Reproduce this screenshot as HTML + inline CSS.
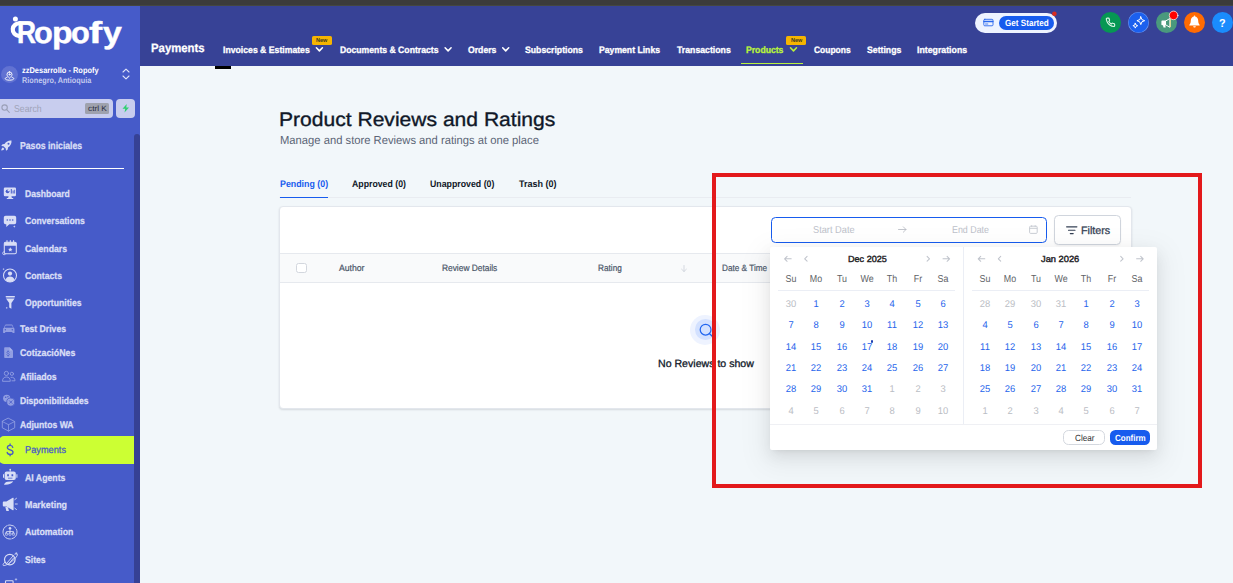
<!DOCTYPE html>
<html lang="en">
<head>
<meta charset="utf-8">
<title>Product Reviews and Ratings</title>
<style>
*{box-sizing:border-box;margin:0;padding:0}
html,body{width:1233px;height:583px;overflow:hidden}
body{position:relative;background:#f2f7fa;font-family:"Liberation Sans",sans-serif;color:#101828;text-rendering:geometricPrecision}
.a{position:absolute}
.t{position:absolute;white-space:nowrap;line-height:1;transform-origin:0 50%}
.c{transform-origin:50% 50%}
svg{position:absolute;overflow:visible}
</style>
</head>
<body>
<div class="a" style="left:0;top:0;width:1233px;height:5px;background:#3b3b3b"></div>
<div class="a" style="left:0;top:5px;width:140px;height:578px;background:#465bc9"></div>
<div class="a" style="left:140px;top:5px;width:1093px;height:61px;background:#374296"></div>
<div class="a" style="left:0;top:5px;width:1233px;height:1px;background:#444741"></div>
<div class="a" style="left:215px;top:66px;width:16px;height:3px;background:#000"></div>
<!-- sidebar scrollbar -->
<div class="a" style="left:134px;top:133.5px;width:6px;height:460px;background:#364195;border-radius:3px"></div>
<svg style="left:0;top:0" width="40" height="60" viewBox="0 0 40 60" fill="none"><circle cx="15.4" cy="19.1" r="2.5" fill="#fff"/><path d="M20 23.3A6.6 6.3 0 1 0 18.8 35.9" stroke="#fff" stroke-width="4.2" stroke-linecap="round"/></svg>
<!-- account -->
<div class="a" style="left:1px;top:66px;width:17px;height:17px;border-radius:50%;background:#6172d2"></div>
<svg style="left:0;top:60.9px" width="20" height="30" viewBox="0 60 20 30" fill="none" stroke="#fff" stroke-width=".95" stroke-linecap="round" stroke-linejoin="round"><path d="M9.5 70.9a2.5 2.5 0 0 1 2.5 2.5c0 1.6-1.5 2.8-2.5 3.8-1-1-2.5-2.2-2.5-3.8a2.5 2.5 0 0 1 2.5-2.5z"/><circle cx="9.5" cy="73.4" r=".6"/><path d="M7 76.3c-1.1.3-1.8.8-1.8 1.3 0 .9 1.9 1.6 4.3 1.6s4.3-.7 4.3-1.6c0-.5-.7-1-1.8-1.3"/></svg>
<svg style="left:122px;top:68px" width="8" height="12" viewBox="0 0 8 12" fill="none" stroke="#dfe3f8" stroke-width="1.1" stroke-linecap="round" stroke-linejoin="round"><path d="M1 4 4 1.2 7 4"/><path d="M1 8 4 10.8 7 8"/></svg>
<!-- search -->
<div class="a" style="left:-4px;top:99px;width:117px;height:19px;border-radius:4px;background:#c8cdee"></div>
<svg style="left:1px;top:104px" width="9" height="9" viewBox="0 0 9 9" fill="none" stroke="#9a9fb6" stroke-width="1.1" stroke-linecap="round"><circle cx="3.6" cy="3.6" r="2.7"/><path d="M5.7 5.7 8.3 8.3"/></svg>
<div class="a" style="left:85px;top:103px;width:24px;height:11px;border-radius:1.5px;background:#9fa2ae"></div>
<div class="a" style="left:116px;top:99px;width:19px;height:19px;border-radius:4px;background:#c8cdee"></div>
<svg style="left:122px;top:104px" width="7.5" height="8.5" viewBox="0 0 15 17"><path d="M9.5 0 1 9.5h5.5L5 17l9-10H8.5z" fill="#2fd071"/></svg>
<!-- pasos iniciales rocket -->
<svg style="left:1px;top:140px" width="11" height="11" viewBox="0 0 22 22" fill="#d9def6"><path d="M21 1c-6-.5-11 2-14 7L3 8.5.5 12l4.5.5 4.5 4.5.5 4.5L13.5 19l.5-4c5-3 7.5-8 7-14zM15 9.5A2 2 0 1 1 15 5.5a2 2 0 0 1 0 4z"/><path d="M4 15c-2 .5-3 2.5-3.5 6 3.5-.5 5.5-1.5 6-3.5z"/></svg>
<div class="a" style="left:2px;top:167.6px;width:122px;height:1px;background:#fff"></div>
<!-- active item -->
<div class="a" style="left:-1px;top:436px;width:135px;height:28px;border-radius:5px 0 0 5px;background:#ccff33"></div>
<svg style="left:0;top:0" width="140" height="583" viewBox="0 0 140 583" fill="none" stroke-linecap="round" stroke-linejoin="round">
<g fill="#d9def6" stroke="none">
<!-- dashboard -->
<path d="M5 187.5h9.8a1.2 1.2 0 0 1 1.2 1.2v6.3a1.2 1.2 0 0 1-1.2 1.2H5a1.2 1.2 0 0 1-1.2-1.2v-6.3A1.2 1.2 0 0 1 5 187.5z"/>
<path d="M8.6 196h2.8l.5 2h1.3v.9H6.8v-.9h1.3z"/>
<!-- conversations -->
<path d="M5.6 215.8h8.8a1.8 1.8 0 0 1 1.8 1.8v4.9a1.8 1.8 0 0 1-1.8 1.8H9.3L6.3 226.9v-2.6h-.7a1.8 1.8 0 0 1-1.8-1.8v-4.9a1.8 1.8 0 0 1 1.8-1.8z"/>
<path d="M14.3 225.3l.35.9.9.35-.9.35-.35.9-.35-.9-.9-.35.9-.35z"/>
<!-- calendar -->
<path d="M4.3 243.5a1.3 1.3 0 0 1 1.3-1.3h9.4a1.3 1.3 0 0 1 1.3 1.3v2.3H4.3z"/>
<path d="M10.3 247.3l.65 1.4 1.5.2-1.1 1.05.3 1.5-1.35-.75-1.35.75.3-1.5-1.1-1.05 1.5-.2z"/>
<!-- contacts -->
<circle cx="10" cy="273.6" r="2.1"/>
<path d="M5.6 279.8c.6-2.3 2.3-3.3 4.4-3.3s3.8 1 4.4 3.3c-1.1 1.3-2.7 2.1-4.4 2.1s-3.3-.8-4.4-2.1z"/>
<path d="M3.6 268l.3.8.8.3-.8.3-.3.8-.3-.8-.8-.3.8-.3z"/>
<!-- funnel -->
<path d="M6.3 296.1h8a.7.7 0 0 1 0 1.4h-8a.7.7 0 0 1 0-1.4z"/>
<path d="M6 298.5h8.6l-3.2 4.6v5.7l-2.2-1.3v-4.4z"/>
<path d="M6.8 306.8l.3.8.8.3-.8.3-.3.8-.3-.8-.8-.3.8-.3z"/>
<!-- robot -->
<circle cx="10.2" cy="469.7" r=".9"/>
<path d="M9.8 470h.8v1.8h-.8z"/>
<path d="M6.6 471.5h7.2a2 2 0 0 1 2 2v4.6a2 2 0 0 1-2 2H6.6a2 2 0 0 1-2-2v-4.6a2 2 0 0 1 2-2z"/>
<path d="M3 474.3h1v3.4H3zM16.4 474.3h1v3.4h-1z"/>
<path d="M4 484.8c.3-1.8 1.8-2.9 3.6-3.1l5.6-.4c-1.3 2.3-4.5 3.8-9.2 3.5z"/>
<!-- megaphone -->
<path d="M3.8 501.6h2.6l6.4-3.8a.5.5 0 0 1 .8.4v11.6a.5.5 0 0 1-.8.4l-6.4-3.8H3.8a1 1 0 0 1-1-1v-2.8a1 1 0 0 1 1-1z"/>
<path d="M5.3 506.8l2.6.5.9 3a.6.6 0 0 1-.6.8H6.8a.6.6 0 0 1-.6-.5z"/>
<!-- automation -->
<circle cx="10" cy="528.3" r="1.25"/>
</g>
<g fill="#465bc9" stroke="none">
<!-- dashboard cutouts -->
<circle cx="7.6" cy="191.3" r="1.9"/>
<path d="M10.8 189h1v4.6h-1zM12.6 190.5h1v3.1h-1zM14.3 189.8h.8v3.8h-.8z"/>
<!-- conversation dots -->
<circle cx="7.3" cy="220" r=".8"/><circle cx="10" cy="220" r=".8"/><circle cx="12.7" cy="220" r=".8"/>
<!-- robot face -->
<path d="M7.2 474.3h1.7v2h-1.7zM11.5 474.3h1.7v2h-1.7zM8 477.8h4.4v.8H8z"/>
</g>
<g fill="#d9def6" stroke="none"><path d="M7.6 189.4v1.9h1.9a1.9 1.9 0 0 0-1.9-1.9z"/></g>
<g stroke="#d9def6" stroke-width="1.05">
<!-- calendar outline -->
<rect x="4.3" y="242.3" width="12" height="11.4" rx="1.3"/>
<path d="M7 240.4v2M10.3 240.4v2M13.6 240.4v2"/>
<path d="M4.3 251.6a1.6 1.6 0 1 0 1.5 2.1" stroke-width=".8"/>
<!-- contacts circle -->
<circle cx="10" cy="275.5" r="6.5"/>
<!-- megaphone waves -->
<path d="M14.8 499.6l1.7-1.3M15.3 504h2M14.8 508.2l1.7 1.3" stroke-width=".9"/>
<!-- automation -->
<circle cx="10" cy="532" r="7" stroke-width=".9" stroke-dasharray="9 1.2"/>
<path d="M10 529.5v2M6.5 533v-1.5h7V533M10 531.5V533" stroke-width=".8"/>
<rect x="5.4" y="533" width="2.2" height="2.2" rx=".4" stroke-width=".7"/><rect x="8.9" y="533" width="2.2" height="2.2" rx=".4" stroke-width=".7"/><rect x="12.4" y="533" width="2.2" height="2.2" rx=".4" stroke-width=".7"/>
<!-- sites -->
<circle cx="9.8" cy="559.6" r="5.3" stroke-width="1.2"/>
<path d="M6.8 563.2l6.2-7.2M8.3 564.3l5.6-6.6" stroke-width=".9"/>
<path d="M4.8 562.3c-1.5 1.4-2.1 2.5-1.7 3 .8 1 4.7-.7 8.6-3.8s6.4-6.4 5.6-7.4c-.3-.4-1.2-.4-2.4 0" stroke-width=".9"/>
<path d="M16.3 552.5v1.6M15.5 553.3h1.6" stroke-width=".6"/>
<!-- next item -->
<path d="M5.5 583v-1.5a.8.8 0 0 1 .8-.8h6a.8.8 0 0 1 .8.8v1.5" stroke-width="1.1"/>
<path d="M16 578.6v1.6M15.2 579.4h1.6" stroke-width=".6"/>
</g>
<!-- dim icons -->
<g fill="#919ee2" stroke="none">
<!-- car -->
<path d="M5.9 324.6h5.8a1 1 0 0 1 .95.65l.95 2.55a1.3 1.3 0 0 1 .9 1.25V332.6a.5.5 0 0 1-.5.5h-1.1a.5.5 0 0 1-.5-.5v-.7H5.2v.7a.5.5 0 0 1-.5.5H3.6a.5.5 0 0 1-.5-.5v-3.55a1.3 1.3 0 0 1 .9-1.25l.95-2.55a1 1 0 0 1 .95-.65z"/>
<!-- doc -->
<path d="M5 347.2h4.8l3.2 3.2v6.8a.8.8 0 0 1-.8.8H5a.8.8 0 0 1-.8-.8V348a.8.8 0 0 1 .8-.8z"/>
<!-- coins -->
<circle cx="6.7" cy="398.3" r="3.6"/>
<circle cx="10.8" cy="402.1" r="4.1" stroke="#465bc9" stroke-width=".8"/>
</g>
<g fill="#465bc9" stroke="none">
<path d="M5.5 325.6h6.6l.8 2.1H4.7z"/>
<circle cx="5.3" cy="329.7" r=".7"/><circle cx="12.3" cy="329.7" r=".7"/>
<path d="M9.6 347.4v3h3z" fill="#aab4ea"/>
<circle cx="5.7" cy="397.3" r=".8"/><circle cx="7.9" cy="396.7" r=".7"/>
</g>
<g stroke="#465bc9" stroke-width=".8"><path d="M9.5 400.8l2.6 2.6M12.1 400.8l-2.6 2.6"/>
<path d="M9.3 352.3c-.2-.6-.7-.8-1.2-.8-.7 0-1.2.4-1.2 1 0 1.3 2.5.7 2.5 2 0 .6-.5 1-1.3 1-.6 0-1.1-.3-1.3-.9M8.1 350.8v.7M8.1 355.5v.7" stroke-width=".7"/></g>
<g stroke="#919ee2" stroke-width=".9">
<!-- users -->
<circle cx="6.4" cy="373.4" r="2.1"/>
<path d="M2.5 380.9c0-2.7 1.7-3.9 3.9-3.9s3.9 1.2 3.9 3.9z"/>
<circle cx="11.9" cy="373.8" r="1.6"/>
<path d="M11 377.3c2.4-.4 4 .9 4 3.5h-3"/>
<!-- cube -->
<path d="M8.5 418.3l6.2 3.2v6.3l-6.2 3.2-6.2-3.2v-6.3z"/>
<path d="M2.3 421.5l6.2 3.2 6.2-3.2M8.5 424.7v6.3" stroke-width=".8"/>
</g>
<!-- dollar -->
<g stroke="#4558c8" stroke-width="1.5" transform="translate(10.1 450) scale(.86 .93) translate(-10 -450)">
<path d="M13.1 447.1c-.3-1.4-1.5-2.1-3.1-2.1-1.9 0-3.2.9-3.2 2.4 0 3.3 6.6 1.6 6.6 5 0 1.5-1.3 2.4-3.4 2.4-1.8 0-3.1-.8-3.4-2.2"/>
<path d="M10 443.6v1.4M10 454.8v1.4"/>
</g>
</svg>

<!-- topbar -->
<div class="a" style="left:312px;top:36.2px;width:19.8px;height:8.5px;border-radius:1.6px;background:#f5b401"></div>
<div class="a" style="left:786.4px;top:36.2px;width:19.6px;height:8.5px;border-radius:1.6px;background:#f5b401"></div>
<div class="a" style="left:741px;top:62.5px;width:62px;height:1.6px;background:#b9f23c"></div>
<div class="a" style="left:975px;top:12.6px;width:82.2px;height:20.2px;border-radius:10.1px;background:#eef3ff"></div>
<div class="a" style="left:999px;top:15.5px;width:55.4px;height:14.5px;border-radius:7.3px;background:#175cee"></div>
<div class="a" style="left:1100px;top:11.8px;width:21px;height:21px;border-radius:50%;background:#069753"></div>
<div class="a" style="left:1128px;top:11.8px;width:21px;height:21px;border-radius:50%;background:#1b60ee;box-shadow:inset 0 0 0 .6px rgba(255,255,255,.35)"></div>
<div class="a" style="left:1156px;top:11.8px;width:21px;height:21px;border-radius:50%;background:#4a9a7d"></div>
<div class="a" style="left:1184px;top:11.8px;width:21px;height:21px;border-radius:50%;background:#ff6b02"></div>
<div class="a" style="left:1212px;top:11.8px;width:21px;height:21px;border-radius:50%;background:#1a8cfd"></div>
<svg style="left:140px;top:0" width="1093" height="70" viewBox="140 0 1093 70" fill="none" stroke-linecap="round" stroke-linejoin="round">
<g stroke="#fff" stroke-width="1.55">
<path d="M316.4 47.8l3 3.1 3-3.1M445.1 47.8l3 3.1 3-3.1M502.7 47.8l3 3.1 3-3.1"/>
<path d="M790.5 47.8l3 3.1 3-3.1" stroke="#b9f23c"/>
</g>
<!-- card icon -->
<g stroke="#2a68ee" stroke-width=".9"><rect x="983.8" y="19.3" width="9.2" height="6.5" rx="1"/><path d="M984 21.5h8.8" stroke-width="1.5"/><path d="M985.5 24h2.3" stroke-width=".8"/></g>
<circle cx="1054.4" cy="13.8" r="2.3" fill="#d92d20"/>
<!-- phone -->
<g transform="translate(1105.4 17.3) scale(.42)" stroke="#d9f5e5" stroke-width="2.7"><path d="M22 16.92v3a2 2 0 0 1-2.18 2 19.79 19.79 0 0 1-8.63-3.07 19.5 19.5 0 0 1-6-6 19.79 19.79 0 0 1-3.07-8.67A2 2 0 0 1 4.11 2h3a2 2 0 0 1 2 1.72 12.84 12.84 0 0 0 .7 2.81 2 2 0 0 1-.45 2.11L8.09 9.91a16 16 0 0 0 6 6l1.27-1.27a2 2 0 0 1 2.11-.45 12.84 12.84 0 0 0 2.81.7A2 2 0 0 1 22 16.92z"/></g>
<!-- sparkles -->
<g stroke="#fff" stroke-width="1"><path d="M1140.8 16.8l1.1 2.8 2.8 1.1-2.8 1.1-1.1 2.8-1.1-2.8-2.8-1.1 2.8-1.1z"/><path d="M1135.3 23.3l.7 1.7 1.7.7-1.7.7-.7 1.7-.7-1.7-1.7-.7 1.7-.7z"/></g>
<!-- megaphone -->
<g fill="#fff"><path d="M1162.2 20.6h3.8v4.6h-3.8a.8.8 0 0 1-.8-.8v-3a.8.8 0 0 1 .8-.8z"/><path d="M1163 25h2.3l.4 2.4h-2.2z"/></g>
<path d="M1166 20.8l3.9-2.3v8.8l-3.9-2.3" stroke="#fff" stroke-width="1" fill="none"/>
<path d="M1170.4 19.2v7.4" stroke="#f5dc8c" stroke-width=".9"/>
<circle cx="1173.6" cy="15.4" r="4.3" fill="#ff0000" stroke="#fff" stroke-width=".7"/>
<!-- bell -->
<g fill="#fff"><path d="M1194.5 16.4c2.3 0 3.7 1.7 3.7 4 0 2.6.8 3.6 1.4 4.3.3.4.1.8-.4.8h-9.4c-.5 0-.7-.4-.4-.8.6-.7 1.4-1.7 1.4-4.3 0-2.3 1.4-4 3.7-4z"/><path d="M1193.2 26.3h2.6a1.3 1.3 0 0 1-2.6 0z"/><circle cx="1194.5" cy="16.3" r=".8"/></g>
</svg>

<!-- main -->
<div class="a" style="left:279px;top:197px;width:852px;height:1px;background:#e9ecf1"></div>
<div class="a" style="left:279.5px;top:196.6px;width:48px;height:1.4px;background:#175cee"></div>
<div class="a" style="left:279px;top:206px;width:852.5px;height:203px;background:#fff;border:1px solid #e3e7ed;border-radius:4px;box-shadow:0 1px 2px rgba(16,24,40,.13)"></div>
<div class="a" style="left:280px;top:253px;width:850.5px;height:29.5px;background:#f9fafb;border-top:1px solid #e6e9ee;border-bottom:1px solid #e6e9ee"></div>
<div class="a" style="left:296.3px;top:262.8px;width:10.5px;height:10.5px;background:#fff;border:1px solid #d3d7de;border-radius:2.5px"></div>
<svg style="left:681px;top:264.5px" width="6" height="7" viewBox="0 0 6 7" fill="none" stroke="#d0d5dd" stroke-width=".9" stroke-linecap="round" stroke-linejoin="round"><path d="M3 .5v6M.6 4.2 3 6.5l2.4-2.3"/></svg>
<!-- empty state -->
<div class="a" style="left:690.4px;top:314.7px;width:30px;height:30px;border-radius:50%;background:#eef3ff"></div>
<div class="a" style="left:695.1px;top:319.4px;width:20.6px;height:20.6px;border-radius:50%;background:#d3e1ff"></div>
<svg style="left:698px;top:322px" width="16" height="16" viewBox="0 0 16 16" fill="none" stroke="#2166f0" stroke-width="1.25" stroke-linecap="round"><circle cx="7.6" cy="7.7" r="5.4"/><path d="M11.6 11.7 14.2 14.3"/></svg>
<!-- date input -->
<div class="a" style="left:771px;top:217px;width:276px;height:25.6px;background:#fff;border:1.5px solid #175cee;border-radius:4.5px"></div>
<svg style="left:898px;top:226px" width="8.5" height="7" viewBox="0 0 8.5 7" fill="none" stroke="#b4b8c0" stroke-width=".8" stroke-linecap="round" stroke-linejoin="round"><path d="M.5 3.5h7.5M5.3 .8 8 3.5 5.3 6.2"/></svg>
<svg style="left:1028.5px;top:225px" width="9" height="9" viewBox="0 0 9 9" fill="none" stroke="#c3c7cf" stroke-width=".9"><rect x=".6" y="1.2" width="7.6" height="7.2" rx="1"/><path d="M.6 3.3h7.6M2.6 .3v1.5M6.2 .3v1.5"/></svg>
<!-- filters button -->
<div class="a" style="left:1054px;top:215px;width:67px;height:29.5px;background:#fff;border:1px solid #d0d5dd;border-radius:4.5px;box-shadow:0 1px 2px rgba(16,24,40,.05)"></div>
<svg style="left:1066px;top:225.5px" width="11.5" height="8.5" viewBox="0 0 11.5 8.5" fill="none" stroke="#344054" stroke-width="1.15" stroke-linecap="round"><path d="M.6 .8h10.3M2.5 4.2h6.5M4.3 7.6h2.9"/></svg>
<!-- calendar popup -->
<div class="a" style="left:770.3px;top:246.8px;width:386.8px;height:203px;background:#fff;border-radius:2px;box-shadow:0 3px 6px -4px rgba(0,0,0,.12),0 6px 16px 0 rgba(0,0,0,.08),0 9px 28px 8px rgba(0,0,0,.05)"></div>
<div class="a" style="left:963px;top:247px;width:1px;height:177px;background:#ebeef5"></div>
<div class="a" style="left:770.3px;top:424px;width:386.8px;height:1px;background:#eff0f4"></div>
<div class="a" style="left:778px;top:290.2px;width:177.3px;height:1px;background:#ebeef5"></div>
<div class="a" style="left:971.6px;top:290.2px;width:177.3px;height:1px;background:#ebeef5"></div>
<svg style="left:770px;top:247px" width="390" height="30" viewBox="770 247 390 30"><g transform="translate(0 0)" stroke="#c0c4cc" stroke-width="1.05" fill="none" stroke-linecap="round" stroke-linejoin="round"><path d="M791.2 258.8h-6.6M787.1 256.3l-2.5 2.5 2.5 2.5"/><path d="M807.1 256.40000000000003l-2.4 2.4 2.4 2.4"/><path d="M927.1 256.40000000000003l2.4 2.4-2.4 2.4"/><path d="M943 258.8h6.6M947.1 256.3l2.5 2.5-2.5 2.5"/></g><g transform="translate(193.6 0)" stroke="#c0c4cc" stroke-width="1.05" fill="none" stroke-linecap="round" stroke-linejoin="round"><path d="M791.2 258.8h-6.6M787.1 256.3l-2.5 2.5 2.5 2.5"/><path d="M807.1 256.40000000000003l-2.4 2.4 2.4 2.4"/><path d="M927.1 256.40000000000003l2.4 2.4-2.4 2.4"/><path d="M943 258.8h6.6M947.1 256.3l2.5 2.5-2.5 2.5"/></g></svg>
<div class="a" style="left:871.1px;top:340.3px;width:2.4px;height:2.4px;border-radius:50%;background:#1d3fb0"></div>
<div class="a" style="left:1063.4px;top:430.3px;width:41.7px;height:14.8px;background:#fff;border:1px solid #d4d8df;border-radius:5.5px"></div>
<div class="a" style="left:1110.1px;top:430.3px;width:39.5px;height:14.8px;background:#175cee;border-radius:5.5px"></div>

<div class="a" aria-label="Ropofy" style="left:0;top:0"><span class="t" style="left:16.8px;top:32.96px;font-size:31.6px;font-weight:bold;color:#ffffff;transform:translateY(-50%) scaleX(0.832);-webkit-text-stroke:0.45px #fff;">R</span><span class="t" style="left:34.0px;top:32.96px;font-size:30.4px;font-weight:bold;color:#ffffff;transform:translateY(-50%) scaleX(1.012);-webkit-text-stroke:0.45px #fff;">o</span><span class="t" style="left:52.1px;top:32.96px;font-size:30.4px;font-weight:bold;color:#ffffff;transform:translateY(-50%) scaleX(1.109);-webkit-text-stroke:0.45px #fff;">p</span><span class="t" style="left:70.9px;top:32.96px;font-size:30.4px;font-weight:bold;color:#ffffff;transform:translateY(-50%) scaleX(1.012);-webkit-text-stroke:0.45px #fff;">o</span><span class="t" style="left:88.5px;top:32.96px;font-size:30.4px;font-weight:bold;color:#ffffff;transform:translateY(-50%) scaleX(1.300);-webkit-text-stroke:0.45px #fff;">f</span><span class="t" style="left:103.1px;top:32.96px;font-size:30.4px;font-weight:bold;color:#ffffff;transform:translateY(-50%) scaleX(1.112);-webkit-text-stroke:0.45px #fff;">y</span></div>
<span class="t" style="left:22.0px;top:70.96px;font-size:8.2px;font-weight:bold;color:#ffffff;transform:translateY(-50%) scaleX(0.911);">zzDesarrollo - Ropofy</span>
<span class="t" style="left:22.0px;top:80.96px;font-size:8.2px;font-weight:bold;color:#c3caef;transform:translateY(-50%) scaleX(0.888);">Rionegro, Antioquia</span>
<span class="t" style="left:13.6px;top:109.96px;font-size:10px;font-weight:normal;color:#9fa3b8;transform:translateY(-50%) scaleX(0.871);">Search</span>
<span class="t" style="left:87.5px;top:108.96px;font-size:7.8px;font-weight:normal;color:#2b2d42;transform:translateY(-50%) scaleX(1.064);">ctrl K</span>
<span class="t" style="left:20.3px;top:146.96px;font-size:10.1px;font-weight:bold;color:#d9def6;transform:translateY(-50%) scaleX(0.859);-webkit-text-stroke:0.3px #d9def6;">Pasos iniciales</span>
<span class="t" style="left:25.0px;top:194.96px;font-size:9.7px;font-weight:bold;color:#d9def6;transform:translateY(-50%) scaleX(0.885);-webkit-text-stroke:0.3px #d9def6;">Dashboard</span>
<span class="t" style="left:25.0px;top:221.96px;font-size:9.7px;font-weight:bold;color:#d9def6;transform:translateY(-50%) scaleX(0.889);-webkit-text-stroke:0.3px #d9def6;">Conversations</span>
<span class="t" style="left:25.0px;top:249.96px;font-size:9.7px;font-weight:bold;color:#d9def6;transform:translateY(-50%) scaleX(0.897);-webkit-text-stroke:0.3px #d9def6;">Calendars</span>
<span class="t" style="left:25.0px;top:276.96px;font-size:9.7px;font-weight:bold;color:#d9def6;transform:translateY(-50%) scaleX(0.893);-webkit-text-stroke:0.3px #d9def6;">Contacts</span>
<span class="t" style="left:25.0px;top:303.96px;font-size:9.7px;font-weight:bold;color:#d9def6;transform:translateY(-50%) scaleX(0.890);-webkit-text-stroke:0.3px #d9def6;">Opportunities</span>
<span class="t" style="left:20.3px;top:329.96px;font-size:9.7px;font-weight:bold;color:#d9def6;transform:translateY(-50%) scaleX(0.893);-webkit-text-stroke:0.3px #d9def6;">Test Drives</span>
<span class="t" style="left:20.3px;top:353.96px;font-size:9.7px;font-weight:bold;color:#d9def6;transform:translateY(-50%) scaleX(0.909);-webkit-text-stroke:0.3px #d9def6;">CotizacióNes</span>
<span class="t" style="left:20.3px;top:377.96px;font-size:9.7px;font-weight:bold;color:#d9def6;transform:translateY(-50%) scaleX(0.897);-webkit-text-stroke:0.3px #d9def6;">Afiliados</span>
<span class="t" style="left:20.3px;top:401.96px;font-size:9.7px;font-weight:bold;color:#d9def6;transform:translateY(-50%) scaleX(0.884);-webkit-text-stroke:0.3px #d9def6;">Disponibilidades</span>
<span class="t" style="left:20.3px;top:425.96px;font-size:9.7px;font-weight:bold;color:#d9def6;transform:translateY(-50%) scaleX(0.888);-webkit-text-stroke:0.3px #d9def6;">Adjuntos WA</span>
<span class="t" style="left:25.0px;top:478.96px;font-size:9.7px;font-weight:bold;color:#d9def6;transform:translateY(-50%) scaleX(0.901);-webkit-text-stroke:0.3px #d9def6;">AI Agents</span>
<span class="t" style="left:25.0px;top:505.96px;font-size:9.7px;font-weight:bold;color:#d9def6;transform:translateY(-50%) scaleX(0.918);-webkit-text-stroke:0.3px #d9def6;">Marketing</span>
<span class="t" style="left:25.0px;top:532.96px;font-size:9.7px;font-weight:bold;color:#d9def6;transform:translateY(-50%) scaleX(0.899);-webkit-text-stroke:0.3px #d9def6;">Automation</span>
<span class="t" style="left:25.0px;top:560.96px;font-size:9.7px;font-weight:bold;color:#d9def6;transform:translateY(-50%) scaleX(0.890);-webkit-text-stroke:0.3px #d9def6;">Sites</span>
<span class="t" style="left:25.0px;top:588.96px;font-size:9.7px;font-weight:bold;color:#d9def6;transform:translateY(-50%) scaleX(0.881);-webkit-text-stroke:0.3px #d9def6;">Memberships</span>
<span class="t" style="left:25.0px;top:450.96px;font-size:9.8px;font-weight:normal;color:#4558c8;transform:translateY(-50%) scaleX(0.941);-webkit-text-stroke:0.25px #4558c8;">Payments</span>
<span class="t" style="left:151.0px;top:47.96px;font-size:12.1px;font-weight:bold;color:#ffffff;transform:translateY(-50%) scaleX(0.938);-webkit-text-stroke:0.25px #fff;">Payments</span>
<span class="t" style="left:223.2px;top:49.96px;font-size:9.4px;font-weight:bold;color:#ffffff;transform:translateY(-50%) scaleX(0.925);-webkit-text-stroke:0.3px #fff;">Invoices &amp; Estimates</span>
<span class="t" style="left:339.8px;top:49.96px;font-size:9.4px;font-weight:bold;color:#ffffff;transform:translateY(-50%) scaleX(0.922);-webkit-text-stroke:0.3px #fff;">Documents &amp; Contracts</span>
<span class="t" style="left:467.8px;top:49.96px;font-size:9.4px;font-weight:bold;color:#ffffff;transform:translateY(-50%) scaleX(0.924);-webkit-text-stroke:0.3px #fff;">Orders</span>
<span class="t" style="left:525.1px;top:49.96px;font-size:9.4px;font-weight:bold;color:#ffffff;transform:translateY(-50%) scaleX(0.926);-webkit-text-stroke:0.3px #fff;">Subscriptions</span>
<span class="t" style="left:599.0px;top:49.96px;font-size:9.4px;font-weight:bold;color:#ffffff;transform:translateY(-50%) scaleX(0.922);-webkit-text-stroke:0.3px #fff;">Payment Links</span>
<span class="t" style="left:676.6px;top:49.96px;font-size:9.4px;font-weight:bold;color:#ffffff;transform:translateY(-50%) scaleX(0.930);-webkit-text-stroke:0.3px #fff;">Transactions</span>
<span class="t" style="left:813.9px;top:49.96px;font-size:9.4px;font-weight:bold;color:#ffffff;transform:translateY(-50%) scaleX(0.901);-webkit-text-stroke:0.3px #fff;">Coupons</span>
<span class="t" style="left:866.7px;top:49.96px;font-size:9.4px;font-weight:bold;color:#ffffff;transform:translateY(-50%) scaleX(0.927);-webkit-text-stroke:0.3px #fff;">Settings</span>
<span class="t" style="left:917.4px;top:49.96px;font-size:9.4px;font-weight:bold;color:#ffffff;transform:translateY(-50%) scaleX(0.934);-webkit-text-stroke:0.3px #fff;">Integrations</span>
<span class="t" style="left:746.4px;top:49.96px;font-size:9.4px;font-weight:bold;color:#b9f23c;transform:translateY(-50%) scaleX(0.920);-webkit-text-stroke:0.3px #b9f23c;">Products</span>
<span class="t" style="left:316.3px;top:41.96px;font-size:5.8px;font-weight:bold;color:#3b3a20;transform:translateY(-50%) scaleX(0.948);">New</span>
<span class="t" style="left:790.6px;top:41.96px;font-size:5.8px;font-weight:bold;color:#3b3a20;transform:translateY(-50%) scaleX(0.948);">New</span>
<span class="t" style="left:1004.6px;top:23.96px;font-size:9.1px;font-weight:bold;color:#ffffff;transform:translateY(-50%) scaleX(0.893);">Get Started</span>
<span class="t" style="left:1219.2px;top:24.96px;font-size:11.5px;font-weight:bold;color:#ffffff;transform:translateY(-50%) scaleX(0.939);">?</span>
<span class="t" style="left:279.3px;top:120.96px;font-size:19.6px;font-weight:normal;color:#101828;transform:translateY(-50%) scaleX(1.075);-webkit-text-stroke:0.35px #101828;">Product Reviews and Ratings</span>
<span class="t" style="left:279.5px;top:140.96px;font-size:11.6px;font-weight:normal;color:#5b6576;transform:translateY(-50%) scaleX(0.968);">Manage and store Reviews and ratings at one place</span>
<span class="t" style="left:279.5px;top:184.96px;font-size:9.5px;font-weight:bold;color:#175cee;transform:translateY(-50%) scaleX(0.930);">Pending (0)</span>
<span class="t" style="left:352.1px;top:184.96px;font-size:9.5px;font-weight:bold;color:#101828;transform:translateY(-50%) scaleX(0.920);">Approved (0)</span>
<span class="t" style="left:430.2px;top:184.96px;font-size:9.5px;font-weight:bold;color:#101828;transform:translateY(-50%) scaleX(0.924);">Unapproved (0)</span>
<span class="t" style="left:518.6px;top:184.96px;font-size:9.5px;font-weight:bold;color:#101828;transform:translateY(-50%) scaleX(0.949);">Trash (0)</span>
<span class="t" style="left:338.9px;top:268.96px;font-size:9.2px;font-weight:normal;color:#4a5568;transform:translateY(-50%) scaleX(0.942);-webkit-text-stroke:0.2px #4a5568;">Author</span>
<span class="t" style="left:442.0px;top:268.96px;font-size:9.2px;font-weight:normal;color:#4a5568;transform:translateY(-50%) scaleX(0.910);-webkit-text-stroke:0.2px #4a5568;">Review Details</span>
<span class="t" style="left:598.3px;top:268.96px;font-size:9.2px;font-weight:normal;color:#4a5568;transform:translateY(-50%) scaleX(0.896);-webkit-text-stroke:0.2px #4a5568;">Rating</span>
<span class="t" style="left:721.5px;top:268.96px;font-size:9.2px;font-weight:normal;color:#4a5568;transform:translateY(-50%) scaleX(0.892);-webkit-text-stroke:0.2px #4a5568;">Date &amp; Time</span>
<span class="t" style="left:657.8px;top:363.96px;font-size:10.5px;font-weight:normal;color:#101828;transform:translateY(-50%) scaleX(1.008);-webkit-text-stroke:0.3px #101828;">No Reviews to show</span>
<span class="t" style="left:813.0px;top:230.96px;font-size:10px;font-weight:normal;color:#bcc0c9;transform:translateY(-50%) scaleX(0.924);">Start Date</span>
<span class="t" style="left:952.0px;top:230.96px;font-size:10px;font-weight:normal;color:#bcc0c9;transform:translateY(-50%) scaleX(0.887);">End Date</span>
<span class="t" style="left:1080.7px;top:230.96px;font-size:10.8px;font-weight:normal;color:#344054;transform:translateY(-50%) scaleX(0.990);-webkit-text-stroke:0.3px #344054;">Filters</span>
<span class="t" style="left:847.6px;top:258.96px;font-size:8.9px;font-weight:normal;color:#1f2225;transform:translateY(-50%) scaleX(1.021);-webkit-text-stroke:0.4px #1f2225;">Dec 2025</span>
<span class="t" style="left:1041.4px;top:258.96px;font-size:8.9px;font-weight:normal;color:#1f2225;transform:translateY(-50%) scaleX(1.048);-webkit-text-stroke:0.4px #1f2225;">Jan 2026</span>
<span class="t" style="left:1074.7px;top:437.96px;font-size:9px;font-weight:normal;color:#303133;transform:translateY(-50%) scaleX(0.906);">Clear</span>
<span class="t" style="left:1114.9px;top:437.96px;font-size:9px;font-weight:bold;color:#ffffff;transform:translateY(-50%) scaleX(0.890);">Confirm</span>
<span class="t c" style="left:791.1px;top:279.96px;font-size:10.1px;font-weight:normal;color:#606266;transform:translate(-50%,-50%) scaleX(0.88);">Su</span>
<span class="t c" style="left:984.8px;top:279.96px;font-size:10.1px;font-weight:normal;color:#606266;transform:translate(-50%,-50%) scaleX(0.88);">Su</span>
<span class="t c" style="left:816.4px;top:279.96px;font-size:10.1px;font-weight:normal;color:#606266;transform:translate(-50%,-50%) scaleX(0.88);">Mo</span>
<span class="t c" style="left:1010.1px;top:279.96px;font-size:10.1px;font-weight:normal;color:#606266;transform:translate(-50%,-50%) scaleX(0.88);">Mo</span>
<span class="t c" style="left:841.8px;top:279.96px;font-size:10.1px;font-weight:normal;color:#606266;transform:translate(-50%,-50%) scaleX(0.88);">Tu</span>
<span class="t c" style="left:1035.5px;top:279.96px;font-size:10.1px;font-weight:normal;color:#606266;transform:translate(-50%,-50%) scaleX(0.88);">Tu</span>
<span class="t c" style="left:867.1px;top:279.96px;font-size:10.1px;font-weight:normal;color:#606266;transform:translate(-50%,-50%) scaleX(0.88);">We</span>
<span class="t c" style="left:1060.8px;top:279.96px;font-size:10.1px;font-weight:normal;color:#606266;transform:translate(-50%,-50%) scaleX(0.88);">We</span>
<span class="t c" style="left:892.4px;top:279.96px;font-size:10.1px;font-weight:normal;color:#606266;transform:translate(-50%,-50%) scaleX(0.88);">Th</span>
<span class="t c" style="left:1086.1px;top:279.96px;font-size:10.1px;font-weight:normal;color:#606266;transform:translate(-50%,-50%) scaleX(0.88);">Th</span>
<span class="t c" style="left:917.8px;top:279.96px;font-size:10.1px;font-weight:normal;color:#606266;transform:translate(-50%,-50%) scaleX(0.88);">Fr</span>
<span class="t c" style="left:1111.5px;top:279.96px;font-size:10.1px;font-weight:normal;color:#606266;transform:translate(-50%,-50%) scaleX(0.88);">Fr</span>
<span class="t c" style="left:943.1px;top:279.96px;font-size:10.1px;font-weight:normal;color:#606266;transform:translate(-50%,-50%) scaleX(0.88);">Sa</span>
<span class="t c" style="left:1136.8px;top:279.96px;font-size:10.1px;font-weight:normal;color:#606266;transform:translate(-50%,-50%) scaleX(0.88);">Sa</span>
<span class="t c" style="left:791.1px;top:304.96px;font-size:9.8px;font-weight:normal;color:#babdc4;transform:translate(-50%,-50%) scaleX(0.96);">30</span>
<span class="t c" style="left:816.4px;top:304.96px;font-size:9.8px;font-weight:normal;color:#2563eb;transform:translate(-50%,-50%) scaleX(0.96);">1</span>
<span class="t c" style="left:841.8px;top:304.96px;font-size:9.8px;font-weight:normal;color:#2563eb;transform:translate(-50%,-50%) scaleX(0.96);">2</span>
<span class="t c" style="left:867.1px;top:304.96px;font-size:9.8px;font-weight:normal;color:#2563eb;transform:translate(-50%,-50%) scaleX(0.96);">3</span>
<span class="t c" style="left:892.4px;top:304.96px;font-size:9.8px;font-weight:normal;color:#2563eb;transform:translate(-50%,-50%) scaleX(0.96);">4</span>
<span class="t c" style="left:917.8px;top:304.96px;font-size:9.8px;font-weight:normal;color:#2563eb;transform:translate(-50%,-50%) scaleX(0.96);">5</span>
<span class="t c" style="left:943.1px;top:304.96px;font-size:9.8px;font-weight:normal;color:#2563eb;transform:translate(-50%,-50%) scaleX(0.96);">6</span>
<span class="t c" style="left:791.1px;top:325.96px;font-size:9.8px;font-weight:normal;color:#2563eb;transform:translate(-50%,-50%) scaleX(0.96);">7</span>
<span class="t c" style="left:816.4px;top:325.96px;font-size:9.8px;font-weight:normal;color:#2563eb;transform:translate(-50%,-50%) scaleX(0.96);">8</span>
<span class="t c" style="left:841.8px;top:325.96px;font-size:9.8px;font-weight:normal;color:#2563eb;transform:translate(-50%,-50%) scaleX(0.96);">9</span>
<span class="t c" style="left:867.1px;top:325.96px;font-size:9.8px;font-weight:normal;color:#2563eb;transform:translate(-50%,-50%) scaleX(0.96);">10</span>
<span class="t c" style="left:892.4px;top:325.96px;font-size:9.8px;font-weight:normal;color:#2563eb;transform:translate(-50%,-50%) scaleX(0.96);">11</span>
<span class="t c" style="left:917.8px;top:325.96px;font-size:9.8px;font-weight:normal;color:#2563eb;transform:translate(-50%,-50%) scaleX(0.96);">12</span>
<span class="t c" style="left:943.1px;top:325.96px;font-size:9.8px;font-weight:normal;color:#2563eb;transform:translate(-50%,-50%) scaleX(0.96);">13</span>
<span class="t c" style="left:791.1px;top:347.96px;font-size:9.8px;font-weight:normal;color:#2563eb;transform:translate(-50%,-50%) scaleX(0.96);">14</span>
<span class="t c" style="left:816.4px;top:347.96px;font-size:9.8px;font-weight:normal;color:#2563eb;transform:translate(-50%,-50%) scaleX(0.96);">15</span>
<span class="t c" style="left:841.8px;top:347.96px;font-size:9.8px;font-weight:normal;color:#2563eb;transform:translate(-50%,-50%) scaleX(0.96);">16</span>
<span class="t c" style="left:867.1px;top:347.96px;font-size:9.8px;font-weight:normal;color:#2563eb;transform:translate(-50%,-50%) scaleX(0.96);">17</span>
<span class="t c" style="left:892.4px;top:347.96px;font-size:9.8px;font-weight:normal;color:#2563eb;transform:translate(-50%,-50%) scaleX(0.96);">18</span>
<span class="t c" style="left:917.8px;top:347.96px;font-size:9.8px;font-weight:normal;color:#2563eb;transform:translate(-50%,-50%) scaleX(0.96);">19</span>
<span class="t c" style="left:943.1px;top:347.96px;font-size:9.8px;font-weight:normal;color:#2563eb;transform:translate(-50%,-50%) scaleX(0.96);">20</span>
<span class="t c" style="left:791.1px;top:368.96px;font-size:9.8px;font-weight:normal;color:#2563eb;transform:translate(-50%,-50%) scaleX(0.96);">21</span>
<span class="t c" style="left:816.4px;top:368.96px;font-size:9.8px;font-weight:normal;color:#2563eb;transform:translate(-50%,-50%) scaleX(0.96);">22</span>
<span class="t c" style="left:841.8px;top:368.96px;font-size:9.8px;font-weight:normal;color:#2563eb;transform:translate(-50%,-50%) scaleX(0.96);">23</span>
<span class="t c" style="left:867.1px;top:368.96px;font-size:9.8px;font-weight:normal;color:#2563eb;transform:translate(-50%,-50%) scaleX(0.96);">24</span>
<span class="t c" style="left:892.4px;top:368.96px;font-size:9.8px;font-weight:normal;color:#2563eb;transform:translate(-50%,-50%) scaleX(0.96);">25</span>
<span class="t c" style="left:917.8px;top:368.96px;font-size:9.8px;font-weight:normal;color:#2563eb;transform:translate(-50%,-50%) scaleX(0.96);">26</span>
<span class="t c" style="left:943.1px;top:368.96px;font-size:9.8px;font-weight:normal;color:#2563eb;transform:translate(-50%,-50%) scaleX(0.96);">27</span>
<span class="t c" style="left:791.1px;top:389.96px;font-size:9.8px;font-weight:normal;color:#2563eb;transform:translate(-50%,-50%) scaleX(0.96);">28</span>
<span class="t c" style="left:816.4px;top:389.96px;font-size:9.8px;font-weight:normal;color:#2563eb;transform:translate(-50%,-50%) scaleX(0.96);">29</span>
<span class="t c" style="left:841.8px;top:389.96px;font-size:9.8px;font-weight:normal;color:#2563eb;transform:translate(-50%,-50%) scaleX(0.96);">30</span>
<span class="t c" style="left:867.1px;top:389.96px;font-size:9.8px;font-weight:normal;color:#2563eb;transform:translate(-50%,-50%) scaleX(0.96);">31</span>
<span class="t c" style="left:892.4px;top:389.96px;font-size:9.8px;font-weight:normal;color:#babdc4;transform:translate(-50%,-50%) scaleX(0.96);">1</span>
<span class="t c" style="left:917.8px;top:389.96px;font-size:9.8px;font-weight:normal;color:#babdc4;transform:translate(-50%,-50%) scaleX(0.96);">2</span>
<span class="t c" style="left:943.1px;top:389.96px;font-size:9.8px;font-weight:normal;color:#babdc4;transform:translate(-50%,-50%) scaleX(0.96);">3</span>
<span class="t c" style="left:791.1px;top:411.96px;font-size:9.8px;font-weight:normal;color:#babdc4;transform:translate(-50%,-50%) scaleX(0.96);">4</span>
<span class="t c" style="left:816.4px;top:411.96px;font-size:9.8px;font-weight:normal;color:#babdc4;transform:translate(-50%,-50%) scaleX(0.96);">5</span>
<span class="t c" style="left:841.8px;top:411.96px;font-size:9.8px;font-weight:normal;color:#babdc4;transform:translate(-50%,-50%) scaleX(0.96);">6</span>
<span class="t c" style="left:867.1px;top:411.96px;font-size:9.8px;font-weight:normal;color:#babdc4;transform:translate(-50%,-50%) scaleX(0.96);">7</span>
<span class="t c" style="left:892.4px;top:411.96px;font-size:9.8px;font-weight:normal;color:#babdc4;transform:translate(-50%,-50%) scaleX(0.96);">8</span>
<span class="t c" style="left:917.8px;top:411.96px;font-size:9.8px;font-weight:normal;color:#babdc4;transform:translate(-50%,-50%) scaleX(0.96);">9</span>
<span class="t c" style="left:943.1px;top:411.96px;font-size:9.8px;font-weight:normal;color:#babdc4;transform:translate(-50%,-50%) scaleX(0.96);">10</span>
<span class="t c" style="left:984.8px;top:304.96px;font-size:9.8px;font-weight:normal;color:#babdc4;transform:translate(-50%,-50%) scaleX(0.96);">28</span>
<span class="t c" style="left:1010.1px;top:304.96px;font-size:9.8px;font-weight:normal;color:#babdc4;transform:translate(-50%,-50%) scaleX(0.96);">29</span>
<span class="t c" style="left:1035.5px;top:304.96px;font-size:9.8px;font-weight:normal;color:#babdc4;transform:translate(-50%,-50%) scaleX(0.96);">30</span>
<span class="t c" style="left:1060.8px;top:304.96px;font-size:9.8px;font-weight:normal;color:#babdc4;transform:translate(-50%,-50%) scaleX(0.96);">31</span>
<span class="t c" style="left:1086.1px;top:304.96px;font-size:9.8px;font-weight:normal;color:#2563eb;transform:translate(-50%,-50%) scaleX(0.96);">1</span>
<span class="t c" style="left:1111.5px;top:304.96px;font-size:9.8px;font-weight:normal;color:#2563eb;transform:translate(-50%,-50%) scaleX(0.96);">2</span>
<span class="t c" style="left:1136.8px;top:304.96px;font-size:9.8px;font-weight:normal;color:#2563eb;transform:translate(-50%,-50%) scaleX(0.96);">3</span>
<span class="t c" style="left:984.8px;top:325.96px;font-size:9.8px;font-weight:normal;color:#2563eb;transform:translate(-50%,-50%) scaleX(0.96);">4</span>
<span class="t c" style="left:1010.1px;top:325.96px;font-size:9.8px;font-weight:normal;color:#2563eb;transform:translate(-50%,-50%) scaleX(0.96);">5</span>
<span class="t c" style="left:1035.5px;top:325.96px;font-size:9.8px;font-weight:normal;color:#2563eb;transform:translate(-50%,-50%) scaleX(0.96);">6</span>
<span class="t c" style="left:1060.8px;top:325.96px;font-size:9.8px;font-weight:normal;color:#2563eb;transform:translate(-50%,-50%) scaleX(0.96);">7</span>
<span class="t c" style="left:1086.1px;top:325.96px;font-size:9.8px;font-weight:normal;color:#2563eb;transform:translate(-50%,-50%) scaleX(0.96);">8</span>
<span class="t c" style="left:1111.5px;top:325.96px;font-size:9.8px;font-weight:normal;color:#2563eb;transform:translate(-50%,-50%) scaleX(0.96);">9</span>
<span class="t c" style="left:1136.8px;top:325.96px;font-size:9.8px;font-weight:normal;color:#2563eb;transform:translate(-50%,-50%) scaleX(0.96);">10</span>
<span class="t c" style="left:984.8px;top:347.96px;font-size:9.8px;font-weight:normal;color:#2563eb;transform:translate(-50%,-50%) scaleX(0.96);">11</span>
<span class="t c" style="left:1010.1px;top:347.96px;font-size:9.8px;font-weight:normal;color:#2563eb;transform:translate(-50%,-50%) scaleX(0.96);">12</span>
<span class="t c" style="left:1035.5px;top:347.96px;font-size:9.8px;font-weight:normal;color:#2563eb;transform:translate(-50%,-50%) scaleX(0.96);">13</span>
<span class="t c" style="left:1060.8px;top:347.96px;font-size:9.8px;font-weight:normal;color:#2563eb;transform:translate(-50%,-50%) scaleX(0.96);">14</span>
<span class="t c" style="left:1086.1px;top:347.96px;font-size:9.8px;font-weight:normal;color:#2563eb;transform:translate(-50%,-50%) scaleX(0.96);">15</span>
<span class="t c" style="left:1111.5px;top:347.96px;font-size:9.8px;font-weight:normal;color:#2563eb;transform:translate(-50%,-50%) scaleX(0.96);">16</span>
<span class="t c" style="left:1136.8px;top:347.96px;font-size:9.8px;font-weight:normal;color:#2563eb;transform:translate(-50%,-50%) scaleX(0.96);">17</span>
<span class="t c" style="left:984.8px;top:368.96px;font-size:9.8px;font-weight:normal;color:#2563eb;transform:translate(-50%,-50%) scaleX(0.96);">18</span>
<span class="t c" style="left:1010.1px;top:368.96px;font-size:9.8px;font-weight:normal;color:#2563eb;transform:translate(-50%,-50%) scaleX(0.96);">19</span>
<span class="t c" style="left:1035.5px;top:368.96px;font-size:9.8px;font-weight:normal;color:#2563eb;transform:translate(-50%,-50%) scaleX(0.96);">20</span>
<span class="t c" style="left:1060.8px;top:368.96px;font-size:9.8px;font-weight:normal;color:#2563eb;transform:translate(-50%,-50%) scaleX(0.96);">21</span>
<span class="t c" style="left:1086.1px;top:368.96px;font-size:9.8px;font-weight:normal;color:#2563eb;transform:translate(-50%,-50%) scaleX(0.96);">22</span>
<span class="t c" style="left:1111.5px;top:368.96px;font-size:9.8px;font-weight:normal;color:#2563eb;transform:translate(-50%,-50%) scaleX(0.96);">23</span>
<span class="t c" style="left:1136.8px;top:368.96px;font-size:9.8px;font-weight:normal;color:#2563eb;transform:translate(-50%,-50%) scaleX(0.96);">24</span>
<span class="t c" style="left:984.8px;top:389.96px;font-size:9.8px;font-weight:normal;color:#2563eb;transform:translate(-50%,-50%) scaleX(0.96);">25</span>
<span class="t c" style="left:1010.1px;top:389.96px;font-size:9.8px;font-weight:normal;color:#2563eb;transform:translate(-50%,-50%) scaleX(0.96);">26</span>
<span class="t c" style="left:1035.5px;top:389.96px;font-size:9.8px;font-weight:normal;color:#2563eb;transform:translate(-50%,-50%) scaleX(0.96);">27</span>
<span class="t c" style="left:1060.8px;top:389.96px;font-size:9.8px;font-weight:normal;color:#2563eb;transform:translate(-50%,-50%) scaleX(0.96);">28</span>
<span class="t c" style="left:1086.1px;top:389.96px;font-size:9.8px;font-weight:normal;color:#2563eb;transform:translate(-50%,-50%) scaleX(0.96);">29</span>
<span class="t c" style="left:1111.5px;top:389.96px;font-size:9.8px;font-weight:normal;color:#2563eb;transform:translate(-50%,-50%) scaleX(0.96);">30</span>
<span class="t c" style="left:1136.8px;top:389.96px;font-size:9.8px;font-weight:normal;color:#2563eb;transform:translate(-50%,-50%) scaleX(0.96);">31</span>
<span class="t c" style="left:984.8px;top:411.96px;font-size:9.8px;font-weight:normal;color:#babdc4;transform:translate(-50%,-50%) scaleX(0.96);">1</span>
<span class="t c" style="left:1010.1px;top:411.96px;font-size:9.8px;font-weight:normal;color:#babdc4;transform:translate(-50%,-50%) scaleX(0.96);">2</span>
<span class="t c" style="left:1035.5px;top:411.96px;font-size:9.8px;font-weight:normal;color:#babdc4;transform:translate(-50%,-50%) scaleX(0.96);">3</span>
<span class="t c" style="left:1060.8px;top:411.96px;font-size:9.8px;font-weight:normal;color:#babdc4;transform:translate(-50%,-50%) scaleX(0.96);">4</span>
<span class="t c" style="left:1086.1px;top:411.96px;font-size:9.8px;font-weight:normal;color:#babdc4;transform:translate(-50%,-50%) scaleX(0.96);">5</span>
<span class="t c" style="left:1111.5px;top:411.96px;font-size:9.8px;font-weight:normal;color:#babdc4;transform:translate(-50%,-50%) scaleX(0.96);">6</span>
<span class="t c" style="left:1136.8px;top:411.96px;font-size:9.8px;font-weight:normal;color:#babdc4;transform:translate(-50%,-50%) scaleX(0.96);">7</span>
<div class="a" style="left:712px;top:173px;width:490px;height:315px;border:4px solid #e3191b;z-index:10"></div>
</body>
</html>
